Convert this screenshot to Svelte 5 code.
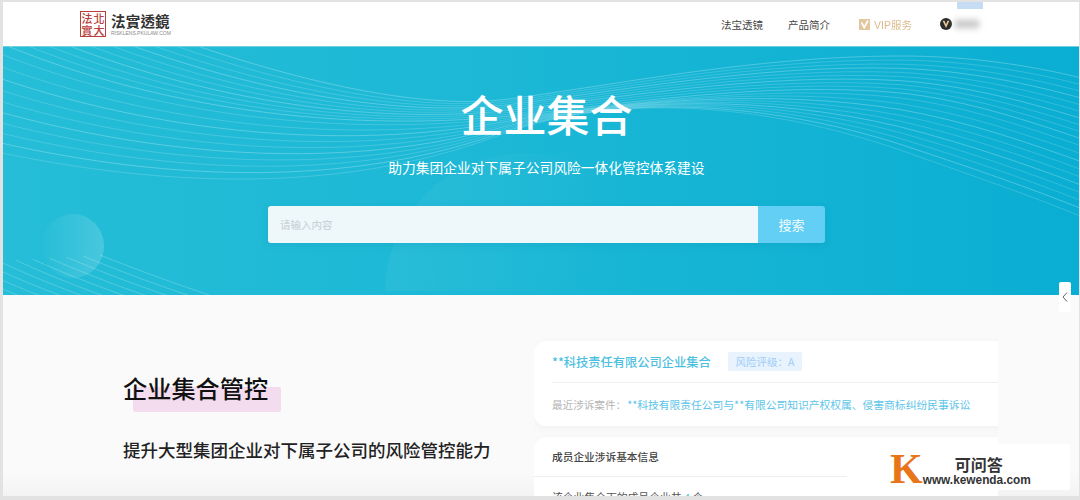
<script>
    // three key curves of the wave background; the lines in between are interpolated
    const top_curve = [100,10, 250,70, 400,110, 500,100, 600,88, 750,56, 900,56, 970,56, 1030,65, 1090,80]
    const mid_curve = [-60,20, 100,100, 300,135, 500,118, 620,105, 770,82, 900,95, 970,103, 1030,125, 1090,145]
    const low_curve = [-200,95, -50,150, 250,230, 500,135, 620,90, 770,105, 900,150, 970,175, 1030,195, 1090,220]
    const line_count = 20

    const wave = (i) => {
        const t = i / (line_count - 1)
        const a = t < 0.5 ? top_curve : mid_curve
        const b = t < 0.5 ? mid_curve : low_curve
        const k = t < 0.5 ? t * 2 : (t - 0.5) * 2
        const p = a.map((v, n) => (v + (b[n] - v) * k).toFixed(1))
        return `M${p[0]} ${p[1]} C${p[2]} ${p[3]} ${p[4]} ${p[5]} ${p[6]} ${p[7]} C${p[8]} ${p[9]} ${p[10]} ${p[11]} ${p[12]} ${p[13]} C${p[14]} ${p[15]} ${p[16]} ${p[17]} ${p[18]} ${p[19]}`
    }
    const waves = Array.from({ length: line_count }, (_, i) => wave(i))
</script>

<div class="frame">
    <header class="topbar">
        <div class="logo">
            <div class="seal">
                <span>法</span><span>北</span><span>實</span><span>大</span>
            </div>
            <div class="logo-text">
                <div class="logo-name">法實透鏡</div>
                <div class="logo-url">RISKLENS.PKULAW.COM</div>
            </div>
        </div>
        <nav class="nav">
            <a href="#lens">法宝透镜</a>
            <a href="#intro">产品简介</a>
            <a href="#vip" class="vip">
                <svg width="11" height="11" viewBox="0 0 11 11">
                    <rect width="11" height="11" fill="#e3c79f" />
                    <path d="M2.5 3.5 L5.2 8.5 L9 1.5" fill="none" stroke="#fff" stroke-width="1.6" />
                </svg>
                VIP服务
            </a>
            <div class="user">
                <svg width="12" height="12" viewBox="0 0 12 12">
                    <circle cx="6" cy="6" r="6" fill="#2b2b2b" />
                    <path d="M2.6 2.8 L6 10 L9.4 2.8 L7.5 2.8 L6 6.2 L4.5 2.8 Z" fill="#e5c896" />
                </svg>
                <div class="user-blur"></div>
            </div>
        </nav>
        <div class="user-tip"></div>
    </header>

    <section class="hero">
        <div class="big-circle"></div>
        <div class="small-circle"></div>
        <svg class="waves" width="1076" height="249" viewBox="3 46 1076 249">
            {#each waves as d, i}
                <path {d} fill="none" stroke="#fff" stroke-width="0.7" opacity={i % 3 == 0 ? 0.36 : 0.24} />
            {/each}
            <g transform="translate(0 245)">
                {#each waves as d}
                    <path {d} fill="none" stroke="#fff" stroke-width="0.7" opacity="0.3" />
                {/each}
            </g>
        </svg>
        <h1>企业集合</h1>
        <p class="slogan">助力集团企业对下属子公司风险一体化管控体系建设</p>
        <div class="search">
            <div class="search-input">请输入内容</div>
            <div class="search-btn">搜索</div>
        </div>
    </section>

    <section class="lower">
        <div class="intro">
            <h2><span class="mark"></span><span class="h2-text">企业集合管控</span></h2>
            <p>提升大型集团企业对下属子公司的风险管控能力</p>
        </div>
        <div class="cards">
            <div class="card first">
                <div class="card-head">
                    <span class="group-name">**科技责任有限公司企业集合</span>
                    <span class="badge">风险评级：A</span>
                </div>
                <div class="case-row">
                    <span class="case-label">最近涉诉案件：</span>
                    <span class="case-link">**科技有限责任公司与**有限公司知识产权权属、侵害商标纠纷民事诉讼</span>
                </div>
            </div>
            <div class="card second">
                <div class="second-head">成员企业涉诉基本信息</div>
                <div class="second-body">该企业集合下的成员企业共 <b>4</b> 个</div>
            </div>
        </div>
    </section>

    <div class="side-tab">
        <svg width="6" height="10" viewBox="0 0 6 10">
            <path d="M5 0.5 L1 5 L5 9.5" fill="none" stroke="#666" stroke-width="1" />
        </svg>
    </div>

    <div class="watermark">
        <span class="wm-k">K</span>
        <div class="wm-text">
            <div class="wm-name">可问答</div>
            <div class="wm-url">www.kewenda.com</div>
        </div>
    </div>
</div>

<style>
    :global(body) {
        margin: 0;
        background: #e2e2e2;
    }

    .frame {
        position: relative;
        width: 1076px;
        height: 496px;
        padding: 2px 1px 2px 3px;
        overflow: hidden;
        font-family: "Noto Sans CJK SC", "Noto Sans", sans-serif;
        filter: blur(0.35px);
    }

    .topbar {
        position: relative;
        height: 44px;
        background: #fff;
        display: flex;
        align-items: center;
        justify-content: space-between;
        padding-left: 77px;
    }

    .logo {
        display: flex;
        align-items: center;
        gap: 5px;
    }

    .seal {
        width: 24px;
        height: 24px;
        border: 1px solid #b8403a;
        display: grid;
        grid-template-columns: 1fr 1fr;
        font-size: 11px;
        line-height: 12px;
        color: #b8403a;
        text-align: center;
        font-family: "Noto Sans CJK TC", sans-serif;
        font-weight: 500;
    }

    .logo-name {
        font-family: "Noto Sans CJK TC", sans-serif;
        font-weight: 700;
        font-size: 14.5px;
        line-height: 17px;
        color: #333;
        letter-spacing: 0.2px;
    }

    .logo-url {
        font-family: "Liberation Sans", sans-serif;
        font-size: 5px;
        line-height: 7px;
        color: #888;
        margin-top: 1px;
    }

    .nav {
        display: flex;
        align-items: center;
        gap: 25px;
        padding-right: 100px;
        font-size: 10.5px;
    }

    .nav a {
        color: #444;
        text-decoration: none;
    }

    .nav a.vip {
        display: flex;
        align-items: center;
        gap: 4px;
        color: #dcbb8e;
        margin-left: 4px;
        margin-right: 3px;
        font-size: 10.5px;
        font-family: "Liberation Sans", "Noto Sans CJK SC", sans-serif;
    }

    .user {
        display: flex;
        align-items: center;
        gap: 3px;
    }

    .user-blur {
        width: 24px;
        height: 8px;
        background: #c4c4c4;
        filter: blur(3px);
    }

    .user-tip {
        position: absolute;
        left: 954px;
        top: 0;
        width: 26px;
        height: 7px;
        background: #c6dcf3;
    }

    .hero {
        position: relative;
        height: 249px;
        box-sizing: border-box;
        overflow: hidden;
        background: linear-gradient(90deg, #25bdd7 0%, #1cb8d6 45%, #0aaed2 100%);
        border-top: 1px solid #6fd0e2;
        padding-left: 11px;
        display: flex;
        flex-direction: column;
        align-items: center;
        color: #fff;
    }

    .waves {
        position: absolute;
        left: 0;
        top: -1px;
    }

    .big-circle {
        position: absolute;
        left: 382px;
        top: 106px;
        width: 280px;
        height: 280px;
        border-radius: 50%;
        background: linear-gradient(100deg, rgba(255, 255, 255, 0.05), rgba(255, 255, 255, 0) 75%);
        clip-path: inset(0 0 142px 0);
    }

    .small-circle {
        position: absolute;
        left: 39px;
        top: 167px;
        width: 62px;
        height: 64px;
        border-radius: 50%;
        background: linear-gradient(90deg, rgba(255, 255, 255, 0.01), rgba(255, 255, 255, 0.17));
    }

    h1 {
        position: relative;
        margin: 37px 0 0;
        font-size: 43px;
        line-height: 58px;
        font-weight: 500;
    }

    .slogan {
        position: relative;
        margin: 15px 0 0;
        font-size: 13.75px;
        line-height: 20px;
    }

    .search {
        position: relative;
        margin-top: 29px;
        width: 557px;
        height: 37px;
        display: flex;
        border-radius: 3px;
        overflow: hidden;
        box-shadow: 0 2px 8px rgba(0, 90, 130, 0.12);
    }

    .search-input {
        flex: 1;
        background: #eef8fb;
        color: #c5cdd2;
        font-size: 10.5px;
        line-height: 37px;
        padding-left: 12px;
    }

    .search-btn {
        width: 67px;
        background: #63cff4;
        text-align: center;
        font-size: 13px;
        line-height: 37px;
        color: #f2fbff;
    }

    .lower {
        height: 201px;
        background: linear-gradient(180deg, #fafafa 0%, #fafafa 88%, #f3f3f3 100%);
        display: flex;
        overflow: hidden;
    }

    .intro {
        width: 531px;
        box-sizing: border-box;
        padding: 75px 0 0 120px;
        flex: none;
    }

    h2 {
        position: relative;
        margin: 0;
        font-size: 24.2px;
        line-height: 36px;
        font-weight: 500;
        color: #111;
    }

    .h2-text {
        position: relative;
    }

    .mark {
        position: absolute;
        left: 10px;
        top: 17px;
        width: 148px;
        height: 25px;
        background: #f2dcee;
        border-radius: 2px;
    }

    .intro p {
        margin: 31px 0 0;
        font-size: 17.5px;
        line-height: 26px;
        font-weight: 500;
        color: #222;
        white-space: nowrap;
    }

    .cards {
        width: 464px;
        flex: none;
        overflow: hidden;
        padding: 46px 0 0;
    }

    .card {
        width: 520px;
        background: #fff;
        border-radius: 12px;
        box-shadow: 0 2px 10px rgba(0, 0, 0, 0.04);
    }

    .first {
        height: 85px;
        padding: 0 18px;
        box-sizing: border-box;
    }

    .card-head {
        height: 41px;
        display: flex;
        align-items: center;
        gap: 17px;
        border-bottom: 1px solid #efefef;
    }

    .group-name {
        font-size: 12.25px;
        font-weight: 500;
        color: #4dbfe0;
        white-space: nowrap;
    }

    .badge {
        width: 74px;
        height: 19px;
        line-height: 19px;
        text-align: center;
        background: #e8f3fe;
        border-radius: 2px;
        font-size: 10.5px;
        color: #9fcdf5;
    }

    .case-row {
        height: 42px;
        display: flex;
        align-items: center;
        gap: 1px;
        white-space: nowrap;
    }

    .case-label {
        font-size: 10.6px;
        color: #b5b5b5;
    }

    .case-link {
        font-size: 10.78px;
        color: #5cc4e8;
    }

    .second {
        margin-top: 11px;
        height: 120px;
    }

    .second-head {
        height: 39px;
        line-height: 39px;
        padding-left: 18px;
        font-size: 10.7px;
        font-weight: 500;
        color: #444;
        border-bottom: 1px solid #eee;
    }

    .second-body {
        padding: 11px 0 0 18px;
        font-size: 10.8px;
        line-height: 18px;
        color: #555;
    }

    .second-body b {
        color: #4dbfe0;
        font-weight: 400;
    }

    .side-tab {
        position: absolute;
        left: 1059px;
        top: 282px;
        width: 12px;
        height: 30px;
        background: #fff;
        border-radius: 2px;
        display: flex;
        align-items: center;
        justify-content: center;
    }

    .watermark {
        position: absolute;
        left: 847px;
        top: 444px;
        width: 223px;
        height: 46px;
        background: #fff;
        box-sizing: border-box;
        padding: 2px 0 0 43px;
        display: flex;
        gap: 0;
    }

    .wm-k {
        font-family: "Liberation Serif", serif;
        font-weight: 700;
        font-size: 42px;
        line-height: 46px;
        color: #e8751a;
    }

    .wm-text {
        padding-top: 8px;
        text-align: center;
    }

    .wm-name {
        font-size: 16px;
        line-height: 20px;
        font-weight: 700;
        color: #333;
        padding-left: 4px;
    }

    .wm-url {
        font-family: "Liberation Sans", sans-serif;
        font-size: 11.85px;
        line-height: 12px;
        font-weight: 700;
        color: #333;
    }
</style>
